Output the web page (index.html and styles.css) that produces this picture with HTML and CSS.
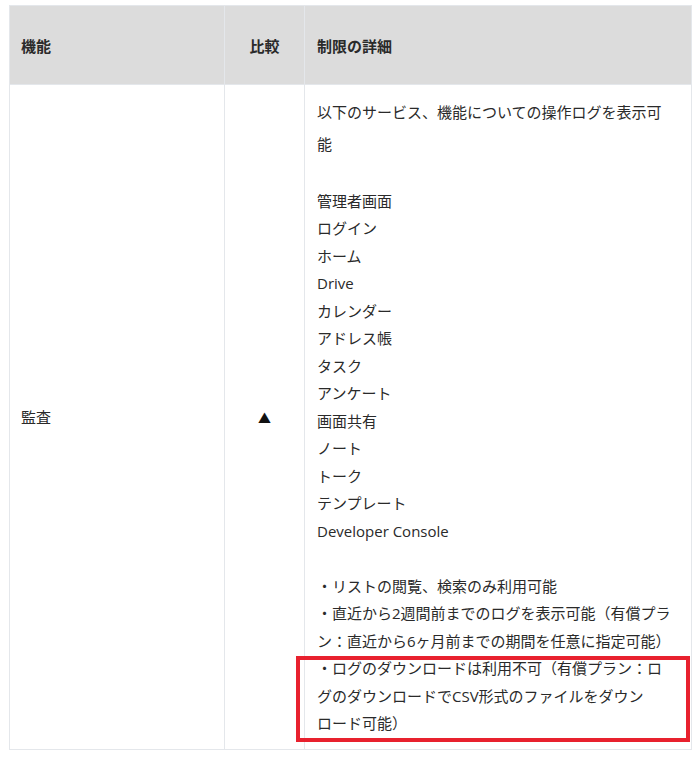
FILE: index.html
```html
<!DOCTYPE html>
<html lang="ja">
  <head>
    <meta charset="UTF-8" />
    <meta name="viewport" content="width=device-width, initial-scale=1.0" />
    <title>機能比較</title>
    <link rel="stylesheet" href="styles.css">
  </head>
  <body>
    <div class="wrap">
      <table class="compare">
        <colgroup>
          <col class="w-name" />
          <col class="w-mark" />
          <col class="w-detail" />
        </colgroup>
        <thead>
          <tr>
            <th class="col-name">機能</th>
            <th class="col-mark">比較</th>
            <th class="col-detail">制限の詳細</th>
          </tr>
        </thead>
        <tbody>
          <tr>
            <td class="col-name">監査</td>
            <td class="col-mark"><span class="mark">▲</span></td>
            <td class="col-detail">
              <div class="lead">以下のサービス、機能についての操作ログを表示可<br />能</div>
              <div class="lines">
                <br />
                管理者画面<br />
                ログイン<br />
                ホーム<br />
                Drive<br />
                カレンダー<br />
                アドレス帳<br />
                タスク<br />
                アンケート<br />
                画面共有<br />
                ノート<br />
                トーク<br />
                テンプレート<br />
                Developer Console<br />
                <br />
                ・リストの閲覧、検索のみ利用可能<br />
                ・直近から2週間前までのログを表示可能（有償プラ<br />
                ン：直近から6ヶ月前までの期間を任意に指定可能）
              </div>
              <div class="lines note-highlight">
                ・ログのダウンロードは利用不可（有償プラン：ロ<br />
                グのダウンロードでCSV形式のファイルをダウン<br />
                ロード可能）
              </div>
            </td>
          </tr>
        </tbody>
      </table>
    </div>
  </body>
</html>
```

FILE: styles.css
```css
body {
  margin: 0;
  background: #ffffff;
  font-family: "Open Sans", "Noto Sans CJK JP", sans-serif;
  font-size: 15px;
  color: #2a2a2a;
}
.wrap {
  padding: 5px 0 0 9px;
}
.compare {
  border-collapse: collapse;
  width: 682px;
  table-layout: fixed;
}
.w-name {
  width: 215px;
}
.w-mark {
  width: 80px;
}
.w-detail {
  width: 387px;
}
.compare th,
.compare td {
  border: 1px solid #e4e7eb;
  vertical-align: middle;
}
.compare th {
  background: #dcdcdc;
  height: 78px;
  padding: 0 12px;
  font-weight: 700;
  text-align: left;
}
.compare .col-name {
  padding-left: 11px;
  text-align: left;
}
.compare .col-mark {
  padding: 0;
  text-align: center;
}
.compare td.col-detail {
  padding: 11px 14px 11px 12px;
  white-space: nowrap;
}
.compare th.col-detail {
  padding-left: 12px;
}
.mark {
  font-family: "Noto Sans CJK JP", sans-serif;
  font-size: 13px;
  color: #111111;
}
.lead {
  line-height: 32px;
}
.lines {
  line-height: 27.5px;
}
.note-highlight {
  position: relative;
}
.note-highlight::after {
  content: "";
  position: absolute;
  left: -21px;
  right: -13px;
  top: 1px;
  bottom: -4px;
  border: 4px solid #e8212e;
  pointer-events: none;
}
```
